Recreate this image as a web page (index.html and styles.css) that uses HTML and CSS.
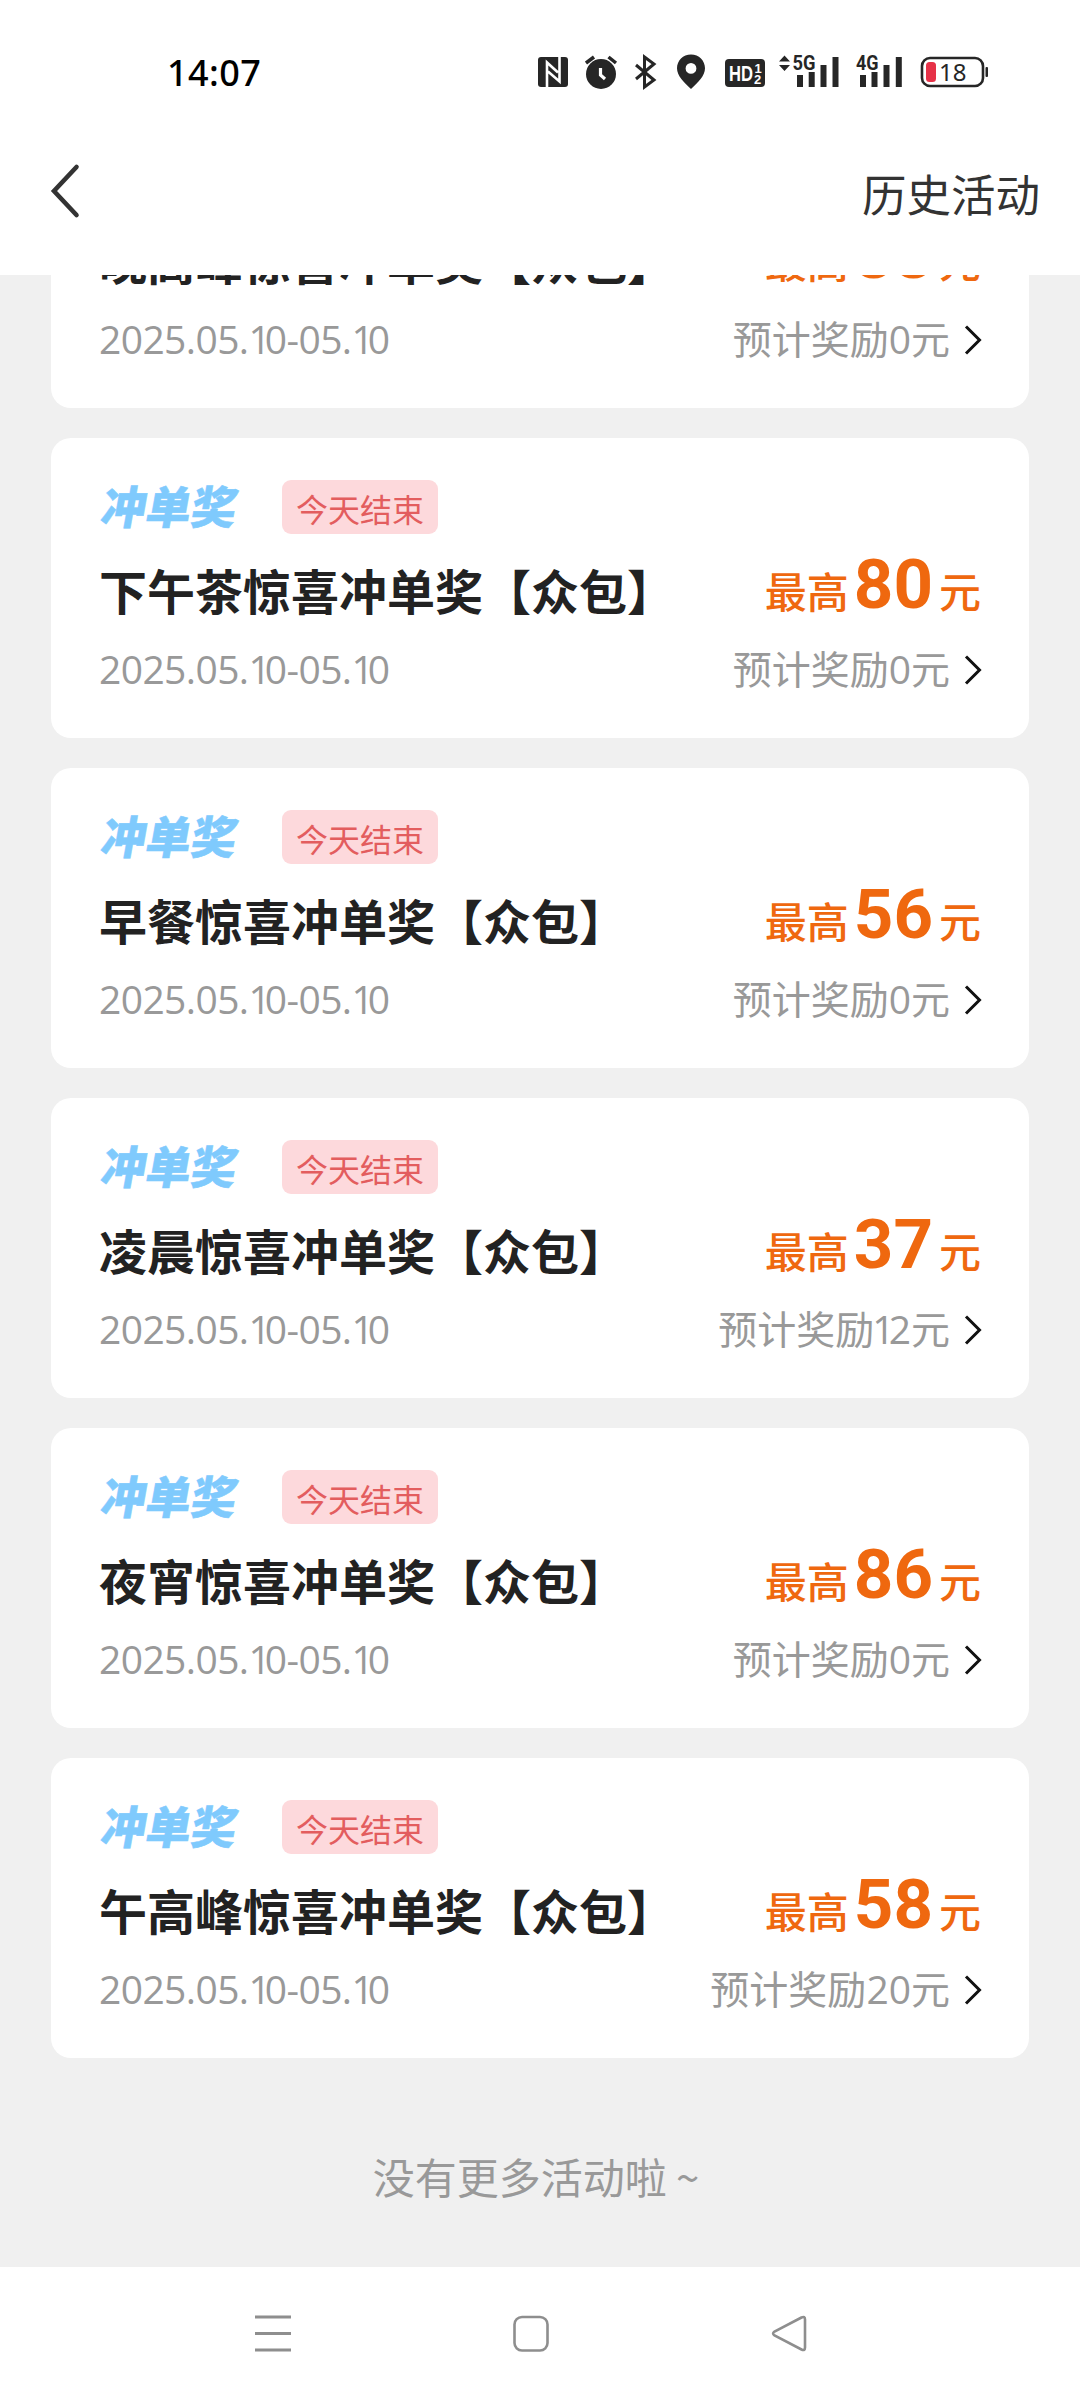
FILE: index.html
```html
<!DOCTYPE html>
<html lang="zh-CN">
<head>
<meta charset="utf-8">
<title>历史活动</title>
<link rel="stylesheet" href="styles.css">
</head>
<body>
<svg class="defs" width="0" height="0" aria-hidden="true">
  <symbol id="chevron" viewBox="0 0 18 30"><path d="M2 1.5 L15.5 15 L2 28.5" fill="none" stroke="#111" stroke-width="3"/></symbol>
</svg>
<div class="screen">
  <div class="status-bar">
    <span class="clock">14:07</span>
    <div class="status-icons">
      <svg width="30" height="42" viewBox="538 50 30 42"><rect x="538" y="57" width="30" height="30" rx="3" fill="#262626"/><path d="M547 87V62.5L558 72.500M559.500 57V81.500L548 71.500" fill="none" stroke="#fff" stroke-width="2.600"/></svg>
      <svg class="gap-17" width="33" height="42" viewBox="585 50 33 42"><circle cx="601" cy="74" r="15" fill="#262626"/><path d="M586 63L594 57M608.500 57L616 63" stroke="#262626" stroke-width="3.500"/><path d="M600.500 68V75L605 79" fill="none" stroke="#fff" stroke-width="3.200"/></svg>
      <svg class="gap-16" width="23" height="42" viewBox="634 50 23 42"><path d="M636 65L654 80L644.500 87V57L654 64L636 79" fill="none" stroke="#262626" stroke-width="3"/></svg>
      <svg class="gap-20" width="29" height="42" viewBox="677 50 29 42"><path fill-rule="evenodd" fill="#262626" d="M691 54.500C683 54.500 677 60.700 677 68.200C677 76 684 82 691 89C698 82 705 76 705 68.200C705 60.700 699 54.500 691 54.500ZM691 63a5.400 5.400 0 1 1 0 10.800a5.400 5.400 0 1 1 0-10.800Z"/></svg>
      <svg class="gap-19" width="40" height="42" viewBox="725 50 40 42"><rect x="725" y="59" width="40" height="28" rx="4" fill="#262626"/><text class="hd-label" x="729" y="81" textLength="24" lengthAdjust="spacingAndGlyphs">HD</text><text class="hd-sim" x="754.500" y="72.500">1</text><text class="hd-sim" x="754" y="84">2</text></svg>
      <svg class="gap-14" width="61" height="42" viewBox="779 50 61 42"><path d="M784.500 55.500L790 61.500H779ZM784.500 71L790 65H779Z" fill="#262626"/><text class="net-label" x="792.500" y="70" textLength="23" lengthAdjust="spacingAndGlyphs">5G</text><path d="M800 75V87M811.700 72V87M823.500 65V87M835.500 57V87" stroke="#262626" stroke-width="6"/></svg>
      <svg class="gap-15" width="48" height="42" viewBox="855 50 48 42"><text class="net-label" x="856" y="70" textLength="22.500" lengthAdjust="spacingAndGlyphs">4G</text><path d="M863 75V87M874.500 72V87M886.500 65V87M898.800 57V87" stroke="#262626" stroke-width="6"/></svg>
      <svg class="gap-17" width="69" height="42" viewBox="920 50 69 42"><rect x="922" y="58" width="61" height="28" rx="8" fill="#fff" stroke="#262626" stroke-width="2.600"/><rect x="926" y="62" width="10" height="20" rx="3.500" fill="#e63248"/><text class="battery-level" x="939" y="81">18</text><rect x="985.500" y="67" width="2.500" height="10" rx="1" fill="#262626"/></svg>
    </div>
  </div>
  <header class="title-bar">
    <svg class="back" width="32" height="56" viewBox="0 0 32 56"><path d="M27.500 4L5 28L27.500 52" fill="none" stroke="#333" stroke-width="4.600" stroke-linecap="round"/></svg>
    <span class="history-link">历史活动</span>
  </header>
  <main class="content">
    <div class="list">
      <section class="card">
        <div class="badges"><span class="kind">冲单奖</span><span class="tag">今天结束</span></div>
        <div class="headline"><h2 class="name">晚高峰惊喜冲单奖【众包】</h2><div class="max">最高<b class="amount">88</b>元</div></div>
        <div class="detail"><span class="date">2025.05.<i class="one">1</i>0-05.<i class="one">1</i>0</span><span class="reward">预计奖励<span class="num">0</span>元</span><svg class="arrow"><use href="#chevron"/></svg></div>
      </section>
      <section class="card">
        <div class="badges"><span class="kind">冲单奖</span><span class="tag">今天结束</span></div>
        <div class="headline"><h2 class="name">下午茶惊喜冲单奖【众包】</h2><div class="max">最高<b class="amount">80</b>元</div></div>
        <div class="detail"><span class="date">2025.05.<i class="one">1</i>0-05.<i class="one">1</i>0</span><span class="reward">预计奖励<span class="num">0</span>元</span><svg class="arrow"><use href="#chevron"/></svg></div>
      </section>
      <section class="card">
        <div class="badges"><span class="kind">冲单奖</span><span class="tag">今天结束</span></div>
        <div class="headline"><h2 class="name">早餐惊喜冲单奖【众包】</h2><div class="max">最高<b class="amount">56</b>元</div></div>
        <div class="detail"><span class="date">2025.05.<i class="one">1</i>0-05.<i class="one">1</i>0</span><span class="reward">预计奖励<span class="num">0</span>元</span><svg class="arrow"><use href="#chevron"/></svg></div>
      </section>
      <section class="card">
        <div class="badges"><span class="kind">冲单奖</span><span class="tag">今天结束</span></div>
        <div class="headline"><h2 class="name">凌晨惊喜冲单奖【众包】</h2><div class="max">最高<b class="amount">37</b>元</div></div>
        <div class="detail"><span class="date">2025.05.<i class="one">1</i>0-05.<i class="one">1</i>0</span><span class="reward">预计奖励<span class="num"><i class="one">1</i>2</span>元</span><svg class="arrow"><use href="#chevron"/></svg></div>
      </section>
      <section class="card">
        <div class="badges"><span class="kind">冲单奖</span><span class="tag">今天结束</span></div>
        <div class="headline"><h2 class="name">夜宵惊喜冲单奖【众包】</h2><div class="max">最高<b class="amount">86</b>元</div></div>
        <div class="detail"><span class="date">2025.05.<i class="one">1</i>0-05.<i class="one">1</i>0</span><span class="reward">预计奖励<span class="num">0</span>元</span><svg class="arrow"><use href="#chevron"/></svg></div>
      </section>
      <section class="card">
        <div class="badges"><span class="kind">冲单奖</span><span class="tag">今天结束</span></div>
        <div class="headline"><h2 class="name">午高峰惊喜冲单奖【众包】</h2><div class="max">最高<b class="amount">58</b>元</div></div>
        <div class="detail"><span class="date">2025.05.<i class="one">1</i>0-05.<i class="one">1</i>0</span><span class="reward">预计奖励<span class="num">20</span>元</span><svg class="arrow"><use href="#chevron"/></svg></div>
      </section>
    </div>
    <p class="end">没有更多活动啦 ~</p>
  </main>
  <nav class="nav-bar">
    <svg width="36" height="40" viewBox="0 0 36 40"><path d="M0 3H36M0 19.500H36M0 36H36" stroke="#8e8e8e" stroke-width="3"/></svg>
    <svg width="36" height="40" viewBox="0 0 36 40"><rect x="1.500" y="3" width="33" height="33.500" rx="7.500" fill="none" stroke="#8e8e8e" stroke-width="2.600"/></svg>
    <svg width="36" height="40" viewBox="0 0 36 40"><path d="M30.500 3.500L3.500 17.500Q0.700 19.500 3.500 21.500L30.500 35.500Q34 37 34 33.500V5.500Q34 2 30.500 3.500Z" fill="none" stroke="#8e8e8e" stroke-width="2.600"/></svg>
  </nav>
</div>
</body>
</html>
```
FILE: styles.css
```css
* { box-sizing: border-box; }
body {
  margin: 0;
  background: #fff;
  font-family: "Noto Sans CJK SC", sans-serif;
}
.defs { position: absolute; }
.screen {
  width: 1080px;
  height: 2400px;
  display: flex;
  flex-direction: column;
  overflow: hidden;
}

/* system status bar */
.status-bar {
  height: 142px;
  padding: 50px 91px 0 167px;
  display: flex;
  justify-content: space-between;
  align-items: flex-start;
}
.clock {
  font: 500 36px/46px "Noto Sans", "Open Sans", sans-serif;
  letter-spacing: 0.4px;
  color: #000;
}
.status-icons { display: flex; }
.gap-14 { margin-left: 14px; }
.gap-15 { margin-left: 15px; }
.gap-16 { margin-left: 16px; }
.gap-17 { margin-left: 17px; }
.gap-19 { margin-left: 19px; }
.gap-20 { margin-left: 20px; }
.hd-label { font: 700 22px "Liberation Sans", sans-serif; fill: #fff; }
.hd-sim { font: 700 13px "Liberation Sans", sans-serif; fill: #fff; }
.net-label { font: 700 21px Roboto, sans-serif; fill: #262626; }
.battery-level { font: 400 24px "Noto Sans", sans-serif; fill: #262626; }

/* page header */
.title-bar {
  height: 133px;
  flex: none;
  padding: 0 40px 0 49px;
  display: flex;
  justify-content: space-between;
  align-items: flex-start;
}
.back { margin-top: 21px; }
.history-link {
  margin-top: 21px;
  font-size: 44.500px;
  line-height: 60px;
  color: #333;
}

/* activity list */
.content {
  height: 1992px;
  flex: none;
  overflow: hidden;
  background: #f0f0f0;
}
.list {
  margin: -167px 51px 0;
  display: flex;
  flex-direction: column;
  gap: 30px;
}
.card {
  height: 300px;
  padding: 42px 47px 0 48px;
  border-radius: 20px;
  background: #fff;
}
.badges {
  height: 54px;
  display: flex;
  align-items: center;
}
.kind {
  width: 183px;
  padding: 0 0 4px 3px;
  font-size: 45px;
  font-weight: 900;
  line-height: 50px;
  color: #7fcafd;
  -webkit-text-stroke: 0.5px #7fcafd;
  transform: skewX(-10deg);
}
.tag {
  width: 156px;
  height: 54px;
  border-radius: 9px;
  background: #fdd9dc;
  color: #e35d5e;
  font-size: 32px;
  line-height: 56px;
  text-align: center;
}
.headline {
  height: 80px;
  margin-top: 12px;
  display: flex;
  justify-content: space-between;
  align-items: flex-start;
}
.name {
  margin: 0;
  font-size: 48px;
  font-weight: 700;
  line-height: 86px;
  color: #222;
}
.max {
  display: flex;
  align-items: baseline;
  padding-right: 1px;
  font-size: 42px;
  font-weight: 500;
  line-height: 88px;
  color: #ef680f;
}
.amount {
  margin: 0 6px 0 5px;
  font-family: Roboto, sans-serif;
  font-size: 69px;
  font-weight: 700;
  line-height: 60px;
}
.detail {
  height: 50px;
  margin-top: 17px;
  display: flex;
  align-items: baseline;
  line-height: 49px;
  font-size: 39px;
  color: #999;
}
.date, .num {
  font-family: "Open Sans", "Noto Sans", sans-serif;
  font-weight: 400;
}
.date { letter-spacing: -0.6px; }
.num .one { margin-left: -2px; }
.one { font-style: normal; letter-spacing: -6px; }
.reward { margin-left: auto; }
.arrow {
  width: 18px;
  height: 30px;
  margin: 4px 0 0 14px;
  align-self: center;
}
.end {
  margin: 88px 0 0;
  padding-right: 8px;
  text-align: center;
  font-size: 42px;
  line-height: 60px;
  color: #999;
}

/* system navigation */
.nav-bar {
  height: 133px;
  padding: 47px 273px 0 255px;
  display: flex;
  justify-content: space-between;
}
```
